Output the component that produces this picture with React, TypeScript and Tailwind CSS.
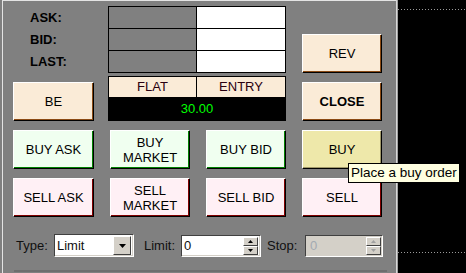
type BtnProps = { label: string[]; look: string; bold?: boolean; extra?: string };

// raised 3d button, colour comes in as a full class string
function Btn({ label, look, bold, extra = "" }: BtnProps) {
  return (
    <div
      className={`flex h-[39px] w-[80px] shrink-0 flex-col items-center justify-center border border-t-white border-l-white border-r-black border-b-black text-center leading-[15px] ${look} ${bold ? "font-bold" : ""} ${extra}`}
    >
      {label.map((l) => (
        <span key={l}>{l}</span>
      ))}
    </div>
  );
}

const BEIGE = "bg-[#faebd7] shadow-[inset_-1px_-1px_0_#8b4a13]";
const GREEN = "bg-[#f0fff0] shadow-[inset_-1px_-1px_0_#008000]";
const HOVER = "bg-[#eee8aa] shadow-[inset_-1px_-1px_0_#a09868]";
const PINK = "bg-[#fff0f5] shadow-[inset_-1px_-1px_0_#800000]";

function Spin({ disabled }: { disabled?: boolean }) {
  const arrow = disabled ? "#a0a0a0" : "#000";
  return (
    <div className="flex h-[18px] w-[15px] flex-col">
      <div className="flex h-[9px] items-center justify-center border border-t-white border-l-white border-r-[#404040] border-b-[#404040] bg-[#d4d0c8]">
        <svg width="5" height="3" viewBox="0 0 5 3">
          <path d="M2.5 0 L5 3 L0 3 Z" fill={arrow} />
        </svg>
      </div>
      <div className="flex h-[9px] items-center justify-center border border-t-white border-l-white border-r-[#404040] border-b-[#404040] bg-[#d4d0c8]">
        <svg width="5" height="3" viewBox="0 0 5 3">
          <path d="M0 0 L5 0 L2.5 3 Z" fill={arrow} />
        </svg>
      </div>
    </div>
  );
}

export default function App() {
  return (
    <div className="relative flex h-[273px] w-[466px] overflow-hidden bg-[#808080] pl-[2px] font-['Liberation_Sans',Arial,sans-serif] text-[13px] text-black">
      {/* order panel */}
      <div className="flex w-[394px] flex-col border-l border-t border-[#e4e4e4] pt-[5px]">
        {/* quotes */}
        <div className="flex h-[67px] pl-[10px]">
          <div className="flex w-[81px] flex-col pl-[17px] pt-px font-bold">
            <div className="flex h-[22px] items-center">ASK:</div>
            <div className="flex h-[22px] items-center">BID:</div>
            <div className="flex h-[22px] items-center">LAST:</div>
          </div>
          <div className="ml-[14px] grid h-[67px] w-[178px] grid-cols-[87px_88px] grid-rows-3 gap-px border border-black bg-black">
            <div className="bg-[#808080]" />
            <div className="bg-white" />
            <div className="bg-[#808080]" />
            <div className="bg-white" />
            <div className="bg-[#808080]" />
            <div className="bg-white" />
          </div>
          <Btn label={["REV"]} look={BEIGE} extra="ml-[16px] self-end" />
        </div>

        {/* position */}
        <div className="mt-[3px] flex h-[45px] pl-[10px]">
          <Btn label={["BE"]} look={BEIGE} extra="self-end w-[81px]" />
          <div className="ml-[14px] flex w-[178px] flex-col border border-black bg-black">
            <div className="grid h-[20px] grid-cols-[87px_1fr] gap-px text-[#2a0010]">
              <div className="flex items-center justify-center bg-[#faebd7]">FLAT</div>
              <div className="flex items-center justify-center bg-[#faebd7]">ENTRY</div>
            </div>
            <div className="flex flex-1 items-center justify-center text-[#00ff00]">30.00</div>
          </div>
          <Btn label={["CLOSE"]} look={BEIGE} bold extra="ml-[16px] self-end" />
        </div>

        {/* buy row */}
        <div className="mt-[9px] flex gap-x-4 pl-[10px]">
          <Btn label={["BUY ASK"]} look={GREEN} extra="w-[81px]" />
          <Btn label={["BUY", "MARKET"]} look={GREEN} />
          <Btn label={["BUY BID"]} look={GREEN} />
          <Btn label={["BUY"]} look={HOVER} />
        </div>

        {/* sell row */}
        <div className="mt-[9px] flex gap-x-4 pl-[10px]">
          <Btn label={["SELL ASK"]} look={PINK} extra="w-[81px]" />
          <Btn label={["SELL", "MARKET"]} look={PINK} />
          <Btn label={["SELL BID"]} look={PINK} />
          <Btn label={["SELL"]} look={PINK} />
        </div>

        {/* order params */}
        <div className="mt-[17px] flex h-[23px] items-center pl-[13px] text-[#101010]">
          <span className="w-[38px]">Type:</span>
          <div className="flex h-[23px] w-[80px] items-center border border-t-[#404040] border-l-[#404040] border-r-white border-b-white bg-white pl-[2px] shadow-[inset_-1px_-1px_0_#d4d0c8]">
            <span className="flex-1">Limit</span>
            <div className="mr-[2px] flex h-[19px] w-[18px] items-center justify-center border border-t-white border-l-white border-r-[#404040] border-b-[#404040] bg-[#d4d0c8]">
              <svg width="7" height="4" viewBox="0 0 7 4">
                <path d="M0 0 L7 0 L3.5 4 Z" fill="#000" />
              </svg>
            </div>
          </div>
          <span className="ml-[10px] w-[37px]">Limit:</span>
          <div className="flex h-[22px] w-[80px] items-center border border-t-[#404040] border-l-[#404040] border-r-white border-b-white bg-white pl-[2px] shadow-[inset_-1px_-1px_0_#d4d0c8]">
            <span className="flex-1">0</span>
            <div className="mr-[2px]">
              <Spin />
            </div>
          </div>
          <span className="ml-[6px] w-[38px]">Stop:</span>
          <div className="flex h-[22px] w-[78px] items-center border border-t-[#404040] border-l-[#404040] border-r-white border-b-white bg-[#d4d0c8] pl-[4px] text-[#a3aab2]">
            <span className="flex-1">0</span>
            <div className="mr-px">
              <Spin disabled />
            </div>
          </div>
        </div>

        <div className="mt-auto mb-[1px] ml-[11px] h-[2px] w-[373px] bg-[#6e6e6e]" />
      </div>

      {/* splitter */}
      <div className="w-[2px] border-l border-[#d8d8d8] bg-[#a0a0a0]" />

      {/* chart */}
      <div className="flex-1 bg-black pt-[9px]">
        <div className="h-px bg-[repeating-linear-gradient(90deg,#9a9a9a_0_1px,transparent_1px_3px)]" />
        <div className="mt-[242px] h-px bg-[repeating-linear-gradient(90deg,#9a9a9a_0_1px,transparent_1px_3px)]" />
      </div>

      {/* tooltip */}
      <div className="absolute left-[348px] top-[163px] flex h-[20px] w-[112px] items-center border border-black bg-[#ffffe1] pl-[2px] text-[13.5px] leading-none">
        Place a buy order
      </div>
    </div>
  );
}
